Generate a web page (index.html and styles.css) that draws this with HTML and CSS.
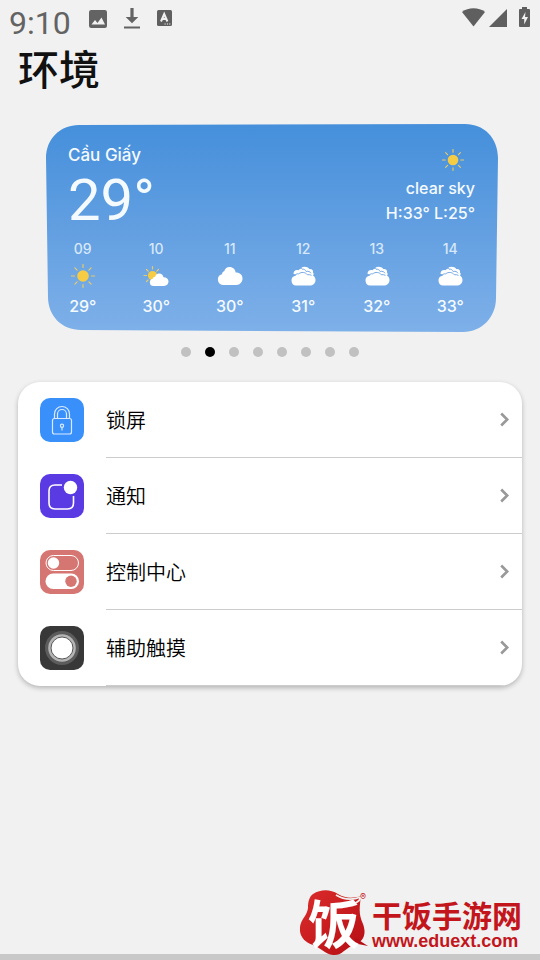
FILE: index.html
```html
<!DOCTYPE html>
<html lang="zh-CN">
<head>
<meta charset="utf-8">
<meta name="viewport" content="width=device-width, initial-scale=1">
<title>环境</title>
<link rel="stylesheet" href="styles.css">
</head>
<body>
<svg class="defs" aria-hidden="true">
  <symbol id="sun" viewBox="0 0 24 24">
    <circle cx="12" cy="12" r="5.8" fill="#f6cc45"/>
    <path d="M12 .5v3M12 20.500v3M.5 12h3M20.500 12h3M3.900 3.900l2.200 2.200M17.900 17.900l2.200 2.200M3.900 20.100l2.200-2.200M17.900 6.100l2.200-2.200" stroke="#e6cc68" stroke-width="1.200" stroke-linecap="round"/>
  </symbol>
  <symbol id="cloud" viewBox="0 0 26 20">
    <path d="M6 19a5.500 5.500 0 0 1-1-10.800C5.200 6 6.400 5.200 7.200 5.200 8 2.500 10 1 12.500 1c3.500 0 5.700 2.300 6.200 5.500C23 6.500 25.500 9 25.500 12.500S23 19 19.500 19z" fill="#fff"/>
  </symbol>
  <symbol id="partly" viewBox="0 0 26 22">
    <circle cx="9.500" cy="10.500" r="4.600" fill="#f6cc45"/>
    <path d="M9.500 1.500v2.500M1 10.500h2.500M9.500 17.500v2M3.500 4.500l1.700 1.700M15.500 4.500l-1.700 1.700M3.500 16.500l1.700-1.700" stroke="#e6cc68" stroke-width="1.200" stroke-linecap="round"/>
    <path d="M10.500 21a3.700 3.700 0 0 1-.8-7.300c.4-1.400 1.300-1.700 2.100-1.700C12.800 9.500 14.300 8.500 16 8.500c2.500 0 4 1.500 4.500 3.800 3 0 5 1.700 5 4.300S23.500 21 21 21z" fill="#fff"/>
  </symbol>
  <symbol id="clouds" viewBox="0 0 26 20">
    <path d="M3.500 8C3.500 5 5.500 3.500 8.500 4.200 9.500 3 11 2.600 12.300 2.800L11.500 1.500C14 .3 18 .8 19.300 3c2.800-.2 4.300 1.300 3.700 3.600 1 1 .8 2.400-.2 3.400z" fill="#fff"/>
    <path d="M12 3.200c2.200-.2 3.500.7 4.200 2.300 2.300-.7 4 .3 4.800 1.800" fill="none" stroke="#75a9e5"/>
    <path d="M6 19.500a5 5 0 0 1-.8-9.800c.7-1.700 2-2.200 3.500-1.800 2.600-2.300 6.700-1.800 8.600.8C22 8 25.500 10.500 25.500 14s-2.500 5.500-6 5.500z" fill="#fff"/>
    <path d="M5.200 9.700c.7-1.700 2-2.200 3.500-1.800 2.600-2.300 6.700-1.800 8.600.8 1.700-.2 3 0 4.200.7" fill="none" stroke="#75a9e5"/>
  </symbol>
</svg>

<header class="status">
  <time class="clock">9:10</time>
  <svg class="s-image" viewBox="0 0 18 18"><rect width="18" height="18" rx="2.200" fill="#636363"/><path d="M2.500 14.500l3.500-4.500 2.500 3 4-5.500 3.500 7z" fill="#f1f1f1"/></svg>
  <svg class="s-download" viewBox="0 0 16 21"><path d="M6.400 0h3.200v9h4.700L8 15.200 1.700 9h4.700zM0 18.500h16v2H0z" fill="#636363"/></svg>
  <svg class="s-lang" viewBox="0 0 15 16"><rect width="15" height="16" rx="1.500" fill="#5f5f5f"/><path d="M4 11.500l3.200-7.500 3.200 7.500M5 9h4.400" fill="none" stroke="#f1f1f1" stroke-width="2"/><path d="M7.500 14h1.200M9.900 14h1.200M12.200 14h1.200" stroke="#f1f1f1"/></svg>
  <span class="spacer"></span>
  <svg class="s-wifi" viewBox="0 0 23 19"><path d="M0 4C6-1 17-1 23 4L11.500 18.500z" fill="#5f5f5f"/></svg>
  <svg class="s-signal" viewBox="0 0 18 18"><path d="M18 0v18H0z" fill="#5f5f5f"/></svg>
  <svg class="s-battery" viewBox="0 0 11 20"><path d="M3 0h5v2h2q1 0 1 1v16q0 1-1 1H1q-1 0-1-1V3q0-1 1-1h2z" fill="#5f5f5f"/><path d="M6.500 5L2.500 12h2.700v5.500L9 10H6z" fill="#f1f1f1"/></svg>
</header>

<main>
  <h1>环境</h1>

  <section class="weather" aria-label="Cầu Giấy">
    <svg class="plate" viewBox="0 0 452 208" preserveAspectRatio="none">
      <defs><linearGradient id="sky" x1="0" y1="0" x2="0" y2="1"><stop offset="0" stop-color="#458fdb"/><stop offset=".5" stop-color="#629fe1"/><stop offset="1" stop-color="#7eb0e9"/></linearGradient></defs>
      <path d="M0 34C0 15 14 1 33 1L419 0C438 0 452 14 452 34L450 174C450 193 436 208 417 208L35 206C16 206 2 192 2 173Z" fill="url(#sky)"/>
    </svg>
    <div class="now">
      <div>
        <p class="place">Cầu Giấy</p>
        <p class="temp">29°</p>
      </div>
      <div class="summary">
        <svg class="sun"><use href="#sun"/></svg>
        <p>clear sky</p>
        <p>H:33° L:25°</p>
      </div>
    </div>
    <ol class="hours">
      <li><span class="hour">09</span><svg><use href="#sun"/></svg><span>29°</span></li>
      <li><span class="hour">10</span><svg><use href="#partly"/></svg><span>30°</span></li>
      <li><span class="hour">11</span><svg class="low"><use href="#cloud"/></svg><span>30°</span></li>
      <li><span class="hour">12</span><svg class="low"><use href="#clouds"/></svg><span>31°</span></li>
      <li><span class="hour">13</span><svg class="low"><use href="#clouds"/></svg><span>32°</span></li>
      <li><span class="hour">14</span><svg class="low"><use href="#clouds"/></svg><span>33°</span></li>
    </ol>
  </section>

  <div class="dots"><i></i><i class="on"></i><i></i><i></i><i></i><i></i><i></i><i></i></div>

  <nav class="menu">
    <a href="#lock">
      <svg class="icon" viewBox="0 0 44 44"><rect width="44" height="44" rx="10" fill="#3990fb"/><g fill="none" stroke="#d9eaff" stroke-width="1.200"><rect x="12.500" y="20.500" width="19" height="15.500" rx="2"/><path d="M14.500 20.500v-4.500a7.500 7.500 0 0 1 15 0v4.500M17.500 20.500v-4.500a4.500 4.500 0 0 1 9 0v4.500"/><circle cx="22" cy="27.800" r="1.600"/><path d="M22 29.400v3"/></g></svg>
      <span class="label">锁屏</span>
      <svg class="chevron" viewBox="0 0 9 14"><path d="M1.200 1l6 6-6 6"/></svg>
    </a>
    <a href="#notice">
      <svg class="icon" viewBox="0 0 44 44"><rect width="44" height="44" rx="10" fill="#5a3be3"/><path d="M22 11h-7q-6 0-6 6v12q0 6 6 6h12.500q6 0 6-6v-7" fill="none" stroke="#fff" stroke-width="1.600"/><circle cx="30.500" cy="13.500" r="6.700" fill="#fff"/></svg>
      <span class="label">通知</span>
      <svg class="chevron" viewBox="0 0 9 14"><path d="M1.200 1l6 6-6 6"/></svg>
    </a>
    <a href="#control">
      <svg class="icon" viewBox="0 0 44 44"><rect width="44" height="44" rx="10" fill="#d57672"/><rect x="6" y="5.500" width="32.500" height="15" rx="7.500" fill="none" stroke="#fff"/><circle cx="13.500" cy="13" r="5.700" fill="#fff"/><rect x="5.500" y="23.500" width="33.500" height="15.500" rx="7.750" fill="#fff"/><circle cx="31" cy="31.200" r="5.700" fill="#d57672"/></svg>
      <span class="label">控制中心</span>
      <svg class="chevron" viewBox="0 0 9 14"><path d="M1.200 1l6 6-6 6"/></svg>
    </a>
    <a href="#touch">
      <svg class="icon" viewBox="0 0 44 44"><rect width="44" height="44" rx="10" fill="#383838"/><circle cx="22" cy="22" r="17" fill="#5c5c5c"/><circle cx="22" cy="22" r="13.800" fill="#b5b5b5"/><circle cx="22" cy="22" r="11" fill="#fff" stroke="#555"/></svg>
      <span class="label">辅助触摸</span>
      <svg class="chevron" viewBox="0 0 9 14"><path d="M1.200 1l6 6-6 6"/></svg>
    </a>
  </nav>
</main>

<footer>
  <div class="seal">
    <svg viewBox="0 0 68 66"><defs><linearGradient id="red" x1="0" y1="0" x2="1" y2="1"><stop offset="0" stop-color="#dc2c2b"/><stop offset="1" stop-color="#b50e14"/></linearGradient></defs><path d="M13 4C21-1 30-1 38 4C46 9 54 8 61 6C59 20 59 25 63 34C67 45 63 52 54 55C45 58 42 66 33 65C25 64 21 58 13 55C4 52-1 46 0 37C1 29 7 26 8 18C8 12 9 7 13 4Z" fill="url(#red)"/><path d="M36 5C44 10 53 10 61 7C59 13 54 14 46 14" fill="none" stroke="#f1f1f1" stroke-width="1.800"/><path d="M53 53L68 56Q60 51 56 48Z" fill="#b50e14"/></svg>
    <span>饭</span>
  </div>
  <div class="brand">
    <small>®</small>
    <strong>干饭手游网</strong>
    <span>www.eduext.com</span>
  </div>
</footer>
</body>
</html>
```
FILE: styles.css
```css
* { box-sizing: border-box; }

body {
  margin: 0;
  min-height: 100vh;
  display: flex;
  flex-direction: column;
  background: #f1f1f1;
  color: #111;
  font-family: Inter, "Noto Sans CJK SC", sans-serif;
}

p, h1, ol { margin: 0; padding: 0; }
svg { display: block; flex: none; }
.defs { position: absolute; width: 0; height: 0; }

.status {
  display: flex;
  align-items: flex-start;
  height: 40px;
  padding: 7px 10px 0 9px;
}
.clock {
  font: 32px/32px Roboto, sans-serif;
  color: #636363;
  width: 80px;
}
.s-image { width: 18px; height: 18px; margin-top: 3px; }
.s-download { width: 16px; height: 21px; margin: 1px 0 0 17px; }
.s-lang { width: 15px; height: 16px; margin: 3px 0 0 17px; }
.spacer { flex: 1; }
.s-wifi { width: 23px; height: 19px; margin-top: 1px; }
.s-signal { width: 18px; height: 18px; margin: 2px 12px 0 4px; }
.s-battery { width: 11px; height: 20px; }

h1 {
  padding-left: 18px;
  font: 500 41px/54px "Noto Sans CJK SC", sans-serif;
}

.weather {
  position: relative;
  margin: 30px 42px 0 46px;
  color: #f5faff;
  font-weight: 500;
}
.plate {
  position: absolute;
  inset: 0;
  width: 100%;
  height: 100%;
}
.now {
  position: relative;
  display: flex;
  justify-content: space-between;
  padding: 19px 23px 0 22px;
  height: 112px;
}
.place { font-size: 17px; line-height: 24px; }
.temp { font: 400 58px/66px Roboto, sans-serif; }
.summary {
  display: flex;
  flex-direction: column;
  align-items: flex-end;
  font-size: 16px;
  line-height: 25px;
}
.sun { width: 22px; height: 22px; margin: 6px 11px 5px 0; }
.hours {
  position: relative;
  display: grid;
  grid-template-columns: repeat(6, 1fr);
  height: 96px;
  padding: 3px 11px 0 0;
  list-style: none;
}
.hours li {
  display: flex;
  flex-direction: column;
  align-items: center;
  font-size: 16px;
  line-height: 22px;
}
.hours .hour { font-size: 14px; line-height: 20px; color: #d7e8fa; }
.hours svg { width: 26px; height: 24px; margin: 5px 0 7px; }
.hours .low { height: 20px; margin: 7px 0 9px; }

.dots {
  display: flex;
  justify-content: center;
  gap: 14px;
  margin-top: 15px;
}
.dots i { width: 10px; height: 10px; border-radius: 50%; background: #c1c1c1; }
.dots .on { background: #000; }

.menu {
  margin: 25px 18px 32px;
  background: #fff;
  border-radius: 22px;
  overflow: hidden;
  box-shadow: 0 2px 5px rgba(0, 0, 0, .25);
}
.menu a {
  display: flex;
  align-items: center;
  padding-left: 22px;
  color: #000;
  text-decoration: none;
}
.icon { width: 44px; height: 44px; margin-right: 22px; }
.label {
  flex: 1;
  border-bottom: 1px solid #ccc;
  font: 350 20px/75px "Noto Sans CJK SC", sans-serif;
}
.chevron {
  align-self: stretch;
  width: 22px;
  height: 76px;
  padding: 0 13px 0 0;
  border-bottom: 1px solid #ccc;
  overflow: visible;
}
.chevron path { fill: none; stroke: #999; stroke-width: 2.600; }

footer {
  display: flex;
  justify-content: flex-end;
  align-items: flex-start;
  gap: 4px;
  height: 70px;
  margin-top: auto;
  padding-right: 18px;
  background: linear-gradient(#c8c8c8, #c8c8c8) bottom / 100% 6px no-repeat;
  color: #c3161c;
}
.seal { position: relative; width: 68px; }
.seal svg { width: 68px; height: 66px; }
.seal span {
  position: absolute;
  inset: 0;
  color: #fff;
  text-align: center;
  font: 700 52px/64px "Noto Sans CJK SC", sans-serif;
}
.brand { position: relative; padding-top: 8px; }
.brand small { position: absolute; left: -12px; top: 1px; font-size: 9px; line-height: 12px; }
.brand strong {
  display: block;
  font: 700 30px/33px "Noto Sans CJK SC", sans-serif;
}
.brand span { display: block; font: 700 18px/20px "Liberation Sans", sans-serif; }
```
